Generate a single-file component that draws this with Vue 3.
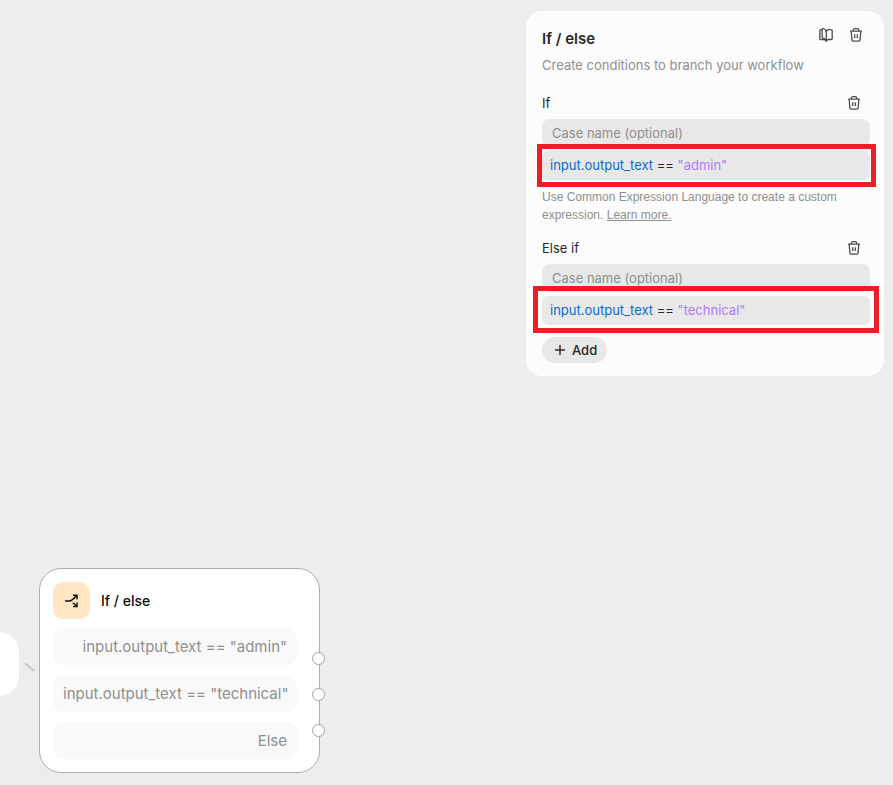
<template>
  <main class="canvas">
    <div class="node-prev"></div>
    <svg class="edge" width="14" height="12" viewBox="0 0 14 12" fill="none" aria-hidden="true">
      <path d="M1.500 2.500C5 2.500 7 9 12 9.500" stroke="#cacaca" stroke-width="2" />
    </svg>

    <section class="node" aria-label="If / else node">
      <header class="node-head">
        <span class="node-icon">
          <svg width="14" height="14" viewBox="0 0 14 14" fill="none" stroke="#16120d" stroke-width="1.5">
            <path d="M0 7h4C7 7 8.500 4.500 11.800 1.500M7.800 8.800l4 3.500" />
            <path d="M8 1.200h4v4M8 12.500h4v-4" />
          </svg>
        </span>
        <span class="node-title">If / else</span>
      </header>
      <ul class="node-rows">
        <li v-for="c in cases" :key="c.id" class="node-row">{{ c.expression }}</li>
        <li class="node-row">Else</li>
      </ul>
      <div class="handles">
        <span v-for="n in cases.length + 1" :key="n" class="handle"></span>
      </div>
    </section>

    <aside class="panel">
      <header class="panel-head">
        <h2 class="panel-title">If / else</h2>
        <div class="panel-actions">
          <button type="button" class="icon-btn" aria-label="Documentation">
            <svg width="16" height="16" viewBox="0 0 16 16" fill="none" stroke="#4c4c4c" stroke-width="1.300" stroke-linejoin="round">
              <path d="M4 2.700H2.800a1 1 0 0 0-1 1v7.800a1 1 0 0 0 1 1H5.500C7 12.500 8 13 8.300 14c.3-1 1.200-1.500 2.500-1.500h2.400a1 1 0 0 0 1-1V3.700a1 1 0 0 0-1-1h-2C9.500 2.700 8.300 3.500 8.300 5" />
              <path d="M8.300 14V5.500C8.300 3.800 7 2.200 5.200 1.500c-.6-.2-1.100.1-1.100.8v7.600c0 .5.300.8.800 1C6.800 11.500 8 12.500 8.300 14z" />
            </svg>
          </button>
          <button type="button" class="icon-btn" aria-label="Delete node">
            <svg width="16" height="16" viewBox="0 0 16 16" fill="none" stroke="#4c4c4c" stroke-width="1.300" stroke-linejoin="round">
              <path d="M2 4.200h12M5.300 4V3.300a1.600 1.600 0 0 1 1.600-1.600h2.200a1.600 1.600 0 0 1 1.600 1.600V4" />
              <path d="M3.200 4.200l.7 8.700a1.300 1.300 0 0 0 1.300 1.200h5.600a1.300 1.300 0 0 0 1.300-1.200l.7-8.700M6.700 7.200v3.800M9.300 7.200v3.800" />
            </svg>
          </button>
        </div>
      </header>
      <p class="panel-desc">Create conditions to branch your workflow</p>

      <div v-for="(c, i) in cases" :key="c.id" class="case">
        <div class="case-head">
          <label class="case-label" :for="'name-' + c.id">{{ i === 0 ? 'If' : 'Else if' }}</label>
          <button type="button" class="icon-btn" aria-label="Delete case" @click="removeCase(i)">
            <svg width="16" height="16" viewBox="0 0 16 16" fill="none" stroke="#4c4c4c" stroke-width="1.300" stroke-linejoin="round">
              <path d="M2 4.200h12M5.300 4V3.300a1.600 1.600 0 0 1 1.600-1.600h2.200a1.600 1.600 0 0 1 1.600 1.600V4" />
              <path d="M3.200 4.200l.7 8.700a1.300 1.300 0 0 0 1.300 1.200h5.600a1.300 1.300 0 0 0 1.300-1.200l.7-8.700M6.700 7.200v3.800M9.300 7.200v3.800" />
            </svg>
          </button>
        </div>
        <input :id="'name-' + c.id" v-model="c.name" class="name-input" type="text" placeholder="Case name (optional)" />
        <div class="expr">
          <div class="expr-text" aria-hidden="true"><span v-for="(t, k) in tokenize(c.expression)" :key="k" :class="t.type">{{ t.text }}</span></div>
          <!-- the input sits over its highlighted text -->
          <input v-model="c.expression" class="expr-input" type="text" aria-label="Expression" spellcheck="false" />
          <span class="marker" :class="{ wide: i > 0 }"></span>
        </div>
        <p v-if="i === 0" class="hint">
          Use Common Expression Language to create a custom<br />
          expression. <a href="#">Learn more.</a>
        </p>
      </div>

      <button type="button" class="add-btn" @click="addCase">
        <svg width="12" height="12" viewBox="0 0 12 12" fill="none" stroke="#282828" stroke-width="1.400" stroke-linecap="round">
          <path d="M6 1.500v9M1.500 6h9" />
        </svg>
        Add
      </button>
    </aside>
  </main>
</template>

<script setup>
import { ref } from 'vue'

const cases = ref([
  { id: 1, name: '', expression: 'input.output_text == "admin"' },
  { id: 2, name: '', expression: 'input.output_text == "technical"' }
])

let nextId = 3

function addCase() {
  cases.value.push({ id: nextId++, name: '', expression: '' })
}

function removeCase(index) {
  cases.value.splice(index, 1)
}

// split an expression into strings, identifiers and operators
function tokenize(text) {
  const parts = text.match(/"[^"]*"?|[A-Za-z_][\w.]*|[^"A-Za-z_]+/g) || []
  return parts.map(part => {
    if (part.startsWith('"')) return { type: 'tok-string', text: part }
    if (/^[A-Za-z_]/.test(part)) return { type: 'tok-name', text: part }
    return { type: 'tok-op', text: part }
  })
}
</script>

<style>
body {
  margin: 0;
  background: #ededed;
}
</style>

<style scoped>
.canvas {
  position: relative;
  min-height: 100vh;
  overflow: hidden;
  background: #ededed;
  font-family: Inter, "Liberation Sans", sans-serif;
  font-size: 13px;
  color: #282828;
}

.canvas *,
.canvas {
  box-sizing: border-box;
}

/* canvas nodes */
.node-prev {
  position: absolute;
  left: -60px;
  top: 632px;
  width: 79px;
  height: 64px;
  border-radius: 20px;
  background: #fff;
}

.edge {
  position: absolute;
  left: 23px;
  top: 661px;
}

.node {
  position: absolute;
  left: 39px;
  top: 568px;
  width: 281px;
  padding: 13px 22px 13px 13px;
  background: #fff;
  border: 1px solid #adadad;
  border-radius: 22px;
}

.node-head {
  display: flex;
  align-items: center;
  gap: 11px;
}

.node-icon {
  display: flex;
  align-items: center;
  justify-content: center;
  width: 37px;
  height: 37px;
  border-radius: 10px;
  background: #ffe6c4;
}

.node-title {
  font-size: 14px;
  font-weight: 500;
  color: #0d0d0d;
}

.node-rows {
  display: flex;
  flex-direction: column;
  gap: 10px;
  margin: 9px 0 0;
  padding: 0;
  list-style: none;
}

.node-row {
  height: 37px;
  padding: 0 10px;
  border-radius: 10px;
  background: #f9f9f9;
  color: #8f8f8f;
  font-size: 15px;
  line-height: 37px;
  text-align: right;
  white-space: nowrap;
}

.handles {
  position: absolute;
  right: -6px;
  top: 83px;
  display: flex;
  flex-direction: column;
  gap: 23px;
}

.handle {
  width: 13px;
  height: 13px;
  border: 1px solid #a0a0a0;
  border-radius: 50%;
  background: #fff;
}

/* settings panel */
.panel {
  position: absolute;
  top: 11px;
  right: 9px;
  width: 358px;
  padding: 12px 14px 13px 16px;
  border-radius: 16px;
  background: #fcfcfc;
}

.panel-head {
  display: flex;
  justify-content: space-between;
  align-items: flex-start;
}

.panel-title {
  margin: 4px 0 0;
  font-size: 15px;
  font-weight: 600;
  line-height: 24px;
}

.panel-actions {
  display: flex;
  gap: 6px;
  padding-right: 2px;
}

.icon-btn {
  display: flex;
  align-items: center;
  justify-content: center;
  width: 24px;
  height: 24px;
  padding: 0;
  border: 0;
  border-radius: 6px;
  background: none;
  cursor: pointer;
}

.icon-btn:hover {
  background: #ececec;
}

.panel-desc {
  margin: 4px 0 12px;
  color: #8f8f8f;
  line-height: 20px;
}

.case-head {
  display: flex;
  justify-content: space-between;
  align-items: center;
  height: 32px;
  padding-right: 4px;
}

.name-input {
  display: block;
  width: 100%;
  height: 28px;
  padding: 0 10px;
  border: 0;
  border-radius: 8px;
  background: #e8e8e8;
  color: #282828;
  font: inherit;
  outline: none;
}

.name-input::placeholder {
  color: #8f8f8f;
}

.expr {
  position: relative;
  height: 29px;
  margin-top: 4px;
  border-radius: 6px;
  background: #e8e8e8;
}

.expr-text {
  padding: 0 8px;
  line-height: 29px;
  white-space: pre;
  overflow: hidden;
}

.expr-input {
  position: absolute;
  inset: 0;
  width: 100%;
  padding: 0 8px;
  border: 0;
  background: transparent;
  color: transparent;
  caret-color: #282828;
  font: inherit;
  outline: none;
}

.tok-name {
  color: #0b6bcb;
}

.tok-string {
  color: #b07cf5;
}

.marker {
  position: absolute;
  inset: -7px -6px -7px -5px;
  border: 5px solid #ee1c24;
  pointer-events: none;
}

.marker.wide {
  inset: -10px -9px -8px -9px;
}

.hint {
  margin: 8px 0;
  color: #8f8f8f;
  font-family: "Liberation Sans", sans-serif;
  font-size: 12px;
  line-height: 18px;
}

.hint a {
  color: inherit;
}

.add-btn {
  display: flex;
  align-items: center;
  gap: 6px;
  height: 26px;
  margin-top: 12px;
  padding: 0 10px 0 12px;
  border: 0;
  border-radius: 13px;
  background: #e8e8e8;
  color: #282828;
  font: inherit;
  font-weight: 500;
  cursor: pointer;
}
</style>
